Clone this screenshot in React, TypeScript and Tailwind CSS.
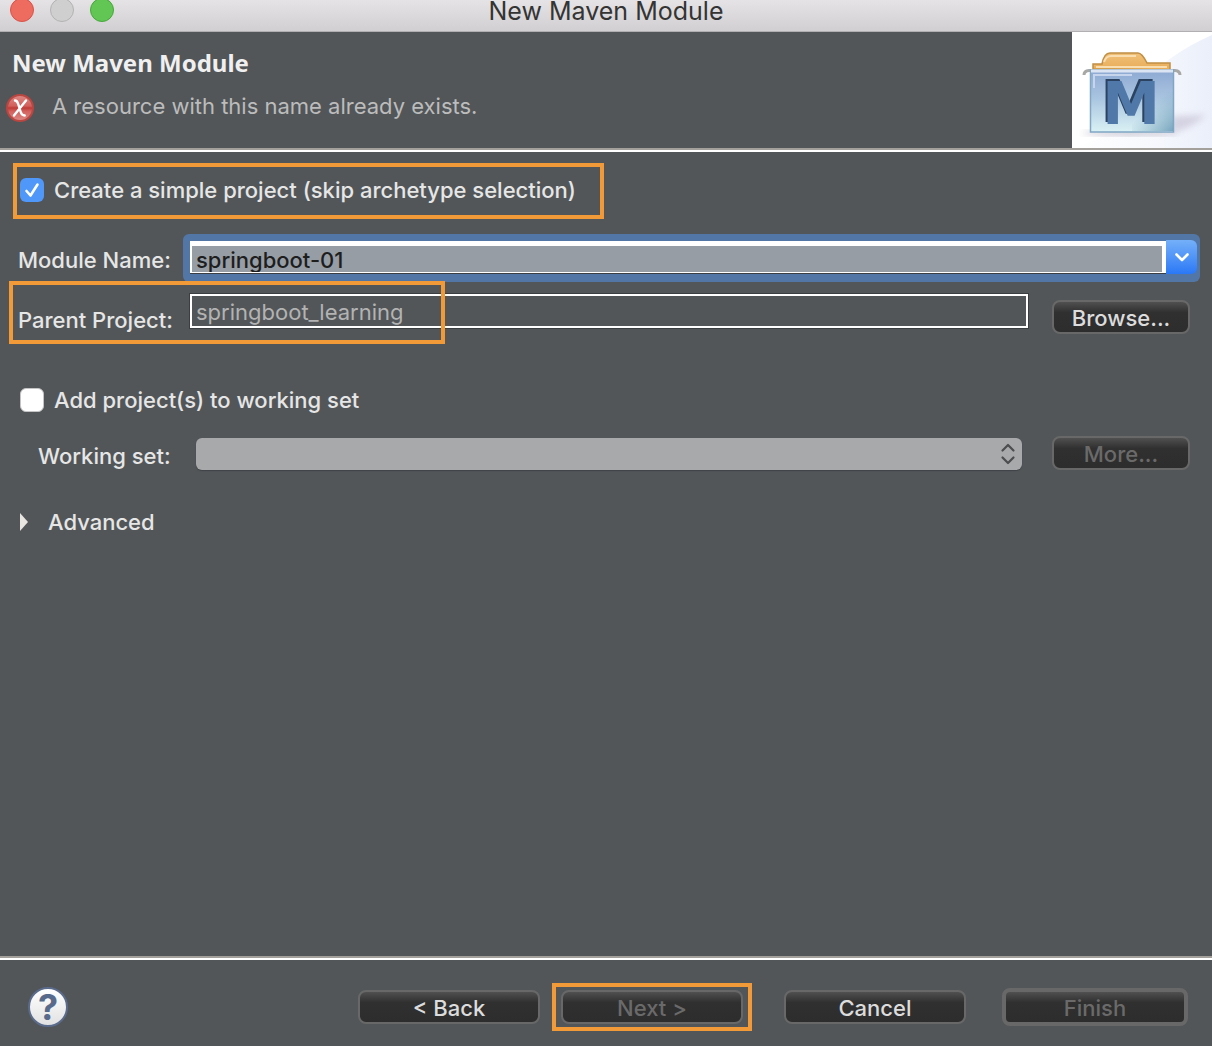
import React from "react";

const annotation = "border-4 border-[#f39a38]";

function PushButton({
  children,
  disabled = false,
  className = "",
}: {
  children: React.ReactNode;
  disabled?: boolean;
  className?: string;
}) {
  return (
    <button
      type="button"
      disabled={disabled}
      className={`flex shrink-0 items-center justify-center rounded-lg border-[#686868] bg-linear-to-b from-[#505050] via-[#303030] via-35% to-[#2d2d2d] pt-0.5 text-[#dcdcdc] disabled:text-[#6a6a6a] ${className}`}
    >
      {children}
    </button>
  );
}

function Divider() {
  return <div className="h-1 shrink-0 border-t-2 border-[#a3a09c] bg-white" />;
}

function ErrorIcon() {
  return (
    <svg viewBox="0 0 28 28" className="size-7 shrink-0" aria-hidden="true">
      <defs>
        <linearGradient id="err" x1="0" y1="0" x2="0" y2="1">
          <stop offset="0" stopColor="#dc8b88" />
          <stop offset="0.42" stopColor="#d2605c" />
          <stop offset="0.5" stopColor="#bd3b38" />
          <stop offset="0.62" stopColor="#d2605c" />
          <stop offset="1" stopColor="#dd8d89" />
        </linearGradient>
      </defs>
      <circle cx="14" cy="14" r="13" fill="url(#err)" stroke="#b94641" strokeWidth="2" />
      <path
        d="M9 6.500c2 0 2.600 1.500 3.200 3.500l2.500 8c.6 2 1.300 3.500 4 3.500M20 6.500L8 21.500"
        fill="none"
        stroke="#fff"
        strokeWidth="2.400"
        strokeLinecap="round"
      />
    </svg>
  );
}

function MavenBanner() {
  return (
    <svg viewBox="0 0 140 116" className="h-[116px] w-[140px] shrink-0 bg-white" role="img" aria-label="Maven">
      <defs>
        <linearGradient id="sky" x1="0" y1="0" x2="1" y2="0">
          <stop offset="0" stopColor="#fff" />
          <stop offset="0.600" stopColor="#f6f8fd" />
          <stop offset="1" stopColor="#eaeffa" />
        </linearGradient>
        <linearGradient id="folder" x1="0" y1="0" x2="0" y2="1">
          <stop offset="0" stopColor="#8ea9d2" />
          <stop offset="0.45" stopColor="#a9c4e0" />
          <stop offset="1" stopColor="#daf1f4" />
        </linearGradient>
        <linearGradient id="corner" x1="0" y1="0" x2="1" y2="1">
          <stop offset="0.400" stopColor="#86b0c4" stopOpacity="0" />
          <stop offset="1" stopColor="#6d9cb8" stopOpacity="0.900" />
        </linearGradient>
        <linearGradient id="tab" x1="0" y1="0" x2="0" y2="1">
          <stop offset="0" stopColor="#f0c078" />
          <stop offset="1" stopColor="#e8ac58" />
        </linearGradient>
        <linearGradient id="side" x1="0" y1="0" x2="0" y2="1">
          <stop offset="0" stopColor="#4a74ac" />
          <stop offset="1" stopColor="#5f90b0" />
        </linearGradient>
        <filter id="soft" x="-30%" y="-50%" width="160%" height="200%">
          <feGaussianBlur stdDeviation="3" />
        </filter>
      </defs>
      <path d="M60 60Q96 22 140 3V116H0Q60 100 60 60Z" fill="url(#sky)" />
      <path d="M98 101Q118 98 134 83L100 84Z" fill="#c9c5d8" opacity="0.700" filter="url(#soft)" />
      <ellipse cx="58" cy="101" rx="48" ry="2" fill="#b9b4c4" filter="url(#soft)" />
      <path d="M21 37V32H30Q32 21 38 21H66Q70 21 75 31H98V38Z" fill="url(#tab)" stroke="#c08f45" strokeWidth="1.500" />
      <path d="M32 30Q34 24 39 24H64M24 35H95" fill="none" stroke="#f8deb0" strokeWidth="2" />
      <path d="M12 43Q12 39 17 38.500H103Q108 39 108 43" fill="none" stroke="#a8a8a6" strokeWidth="3" />
      <rect x="18.500" y="38" width="83" height="62" fill="url(#folder)" stroke="#7fa6c4" strokeWidth="1.500" />
      <rect x="60" y="60" width="41" height="39" fill="url(#corner)" />
      <path d="M19 39H101" stroke="#dbe4f2" strokeWidth="3" />
      <path d="M22 56V43H60" fill="none" stroke="#c6d5ec" strokeWidth="2" />
      <path d="M101 38V100" stroke="url(#side)" strokeWidth="2" />
      <g fontFamily="DejaVu Sans, sans-serif" fontWeight="700" fontSize="58" textAnchor="middle">
        <text x="57" y="90" fill="#2b4361">M</text>
        <text x="59" y="92" fill="#5079aa">M</text>
      </g>
    </svg>
  );
}

export default function App() {
  return (
    <main className="flex min-h-screen flex-col bg-[#525659] font-['Inter','Liberation_Sans',sans-serif] text-[22px] leading-7 font-medium text-[#e6e6e6]">
      <header className="relative flex h-8 shrink-0 items-start justify-center border-b border-[#b1afb1] bg-linear-to-b from-[#e5e3e5] to-[#d1cfd1]">
        <div className="absolute -top-0.5 left-2.5 flex gap-4">
          <button type="button" aria-label="Close" className="size-6 rounded-full border border-[#d9534a] bg-[#ee6b60]" />
          <button type="button" aria-label="Minimize" className="size-6 rounded-full border border-[#b4b3b4] bg-[#d0cfd0]" />
          <button type="button" aria-label="Zoom" className="size-6 rounded-full border border-[#48a83c] bg-[#61c654]" />
        </div>
        <h1 className="text-[25px] leading-[22px] font-normal text-[#343434]">New Maven Module</h1>
      </header>

      <section className="flex shrink-0 justify-between">
        <div className="flex flex-col pt-[15px]">
          <h2 className="ml-3 font-['Noto_Sans'] text-2xl font-bold text-[#f0f0f0]">New Maven Module</h2>
          <div className="mt-[15px] ml-1.5 flex items-start gap-[18px] text-[#bcbcbc]" role="alert">
            <ErrorIcon />
            <p className="-mt-0.5 font-normal">A resource with this name already exists.</p>
          </div>
        </div>
        <MavenBanner />
      </section>
      <Divider />

      <form className="flex flex-1 flex-col pt-[11px]" onSubmit={(e) => e.preventDefault()}>
        <label className={`ml-[13px] flex h-14 w-[591px] items-center gap-2.5 pb-0.5 pl-[3px] ${annotation}`}>
          <span className="relative size-6 shrink-0">
            <input type="checkbox" defaultChecked className="block size-6 appearance-none rounded-md bg-[#4f97f8]" />
            <svg viewBox="0 0 24 24" className="pointer-events-none absolute inset-0 size-6" aria-hidden="true">
              <path d="M6.500 13l4 4.500L17.500 6.500" fill="none" stroke="#fff" strokeWidth="2.600" strokeLinecap="round" strokeLinejoin="round" />
            </svg>
          </span>
          <span className="whitespace-nowrap">Create a simple project (skip archetype selection)</span>
        </label>

        <div className="mt-[15px] mr-3 flex items-center">
          <label htmlFor="module" className="w-[183px] shrink-0 pt-1 pl-[18px]">Module Name:</label>
          <div className="flex h-12 flex-1 items-center rounded-md bg-[#5276a6] pr-[3px] pb-0.5 pl-[7px]">
            <input
              id="module"
              defaultValue="springboot-01"
              className="h-8 min-w-0 flex-1 border-t-[5px] border-r-4 border-b border-l-2 border-white bg-[#969da5] pt-0.5 pl-1 text-[#1e1e1e] shadow-[0_1px_0_#3b3f43] outline-none"
            />
            <button type="button" aria-label="Show module names" className="flex h-[34px] w-[31px] items-center justify-center rounded-r-md bg-linear-to-b from-[#74aff8] to-[#2a78f6]">
              <svg viewBox="0 0 16 16" className="size-4" aria-hidden="true">
                <path d="M2.500 5.500L8 11l5.500-5.500" fill="none" stroke="#fff" strokeWidth="2.600" strokeLinecap="round" strokeLinejoin="round" />
              </svg>
            </button>
          </div>
        </div>

        <div className="relative -mt-px mr-[22px] flex h-[63px] items-start">
          <label htmlFor="parent" className="w-[190px] shrink-0 pt-[25px] pl-[18px]">Parent Project:</label>
          <input
            id="parent"
            readOnly
            defaultValue="springboot_learning"
            className="mt-[13px] h-[34px] min-w-0 flex-1 border-2 border-white bg-transparent pt-0.5 pl-1 font-normal text-[#b3b3b3] shadow-[0_0_0_1px_#3b3e40] outline-none"
          />
          <PushButton className="mt-[19px] ml-6 h-[34px] w-[138px] border-2">Browse...</PushButton>
          <div className={`pointer-events-none absolute top-0 left-[9px] h-[63px] w-[436px] ${annotation}`} />
        </div>

        <label className="mt-[42px] ml-5 flex items-center gap-2.5 self-start">
          <input type="checkbox" className="size-6 appearance-none rounded-md border border-[#c4c4c4] bg-white" />
          Add project(s) to working set
        </label>

        <div className="mt-[22px] mr-[22px] flex items-center">
          <label htmlFor="working" className="w-[196px] shrink-0 pt-1.5 pl-[38px]">Working set:</label>
          <div className="relative flex-1 pt-0.5">
            <select id="working" disabled className="block h-8 w-full appearance-none rounded-md bg-[#a8a9ab] opacity-100 shadow-[0_1px_1px_#404346]" />
            <svg viewBox="0 0 16 24" className="pointer-events-none absolute top-1.5 right-1.5 h-6 w-4" aria-hidden="true">
              <path d="M2.500 8.500L8 3l5.500 5.500M2.500 15.500L8 21l5.500-5.500" fill="none" stroke="#4c4d4f" strokeWidth="2.200" strokeLinecap="round" strokeLinejoin="round" />
            </svg>
          </div>
          <PushButton disabled className="ml-[30px] h-[34px] w-[138px] border-2">More...</PushButton>
        </div>

        <button type="button" aria-expanded="false" className="mt-[38px] ml-5 flex items-center gap-5 self-start">
          <svg viewBox="0 0 8 18" className="h-[18px] w-2" aria-hidden="true">
            <path d="M0 0L8 9L0 18Z" fill="#e9e5e1" />
          </svg>
          Advanced
        </button>
      </form>

      <Divider />
      <footer className="flex h-[86px] shrink-0 items-center justify-between pt-2 pr-6 pl-7">
        <button type="button" aria-label="Help" className="flex size-10 items-center justify-center rounded-full border-2 border-[#5a6b8c] bg-linear-to-b from-white to-[#e2e2e2] text-[36px] leading-9 font-bold text-[#586a8b]">
          ?
        </button>
        <div className="flex items-center">
          <PushButton className="h-[34px] w-[182px] border-2">&lt; Back</PushButton>
          <div className={`mr-8 ml-3 flex h-12 w-[200px] items-center justify-center ${annotation}`}>
            <PushButton disabled className="h-[34px] w-[182px] border-2">Next &gt;</PushButton>
          </div>
          <PushButton className="h-[34px] w-[182px] border-2">Cancel</PushButton>
          <PushButton disabled className="ml-9 h-[38px] w-[186px] border-4">Finish</PushButton>
        </div>
      </footer>
    </main>
  );
}
